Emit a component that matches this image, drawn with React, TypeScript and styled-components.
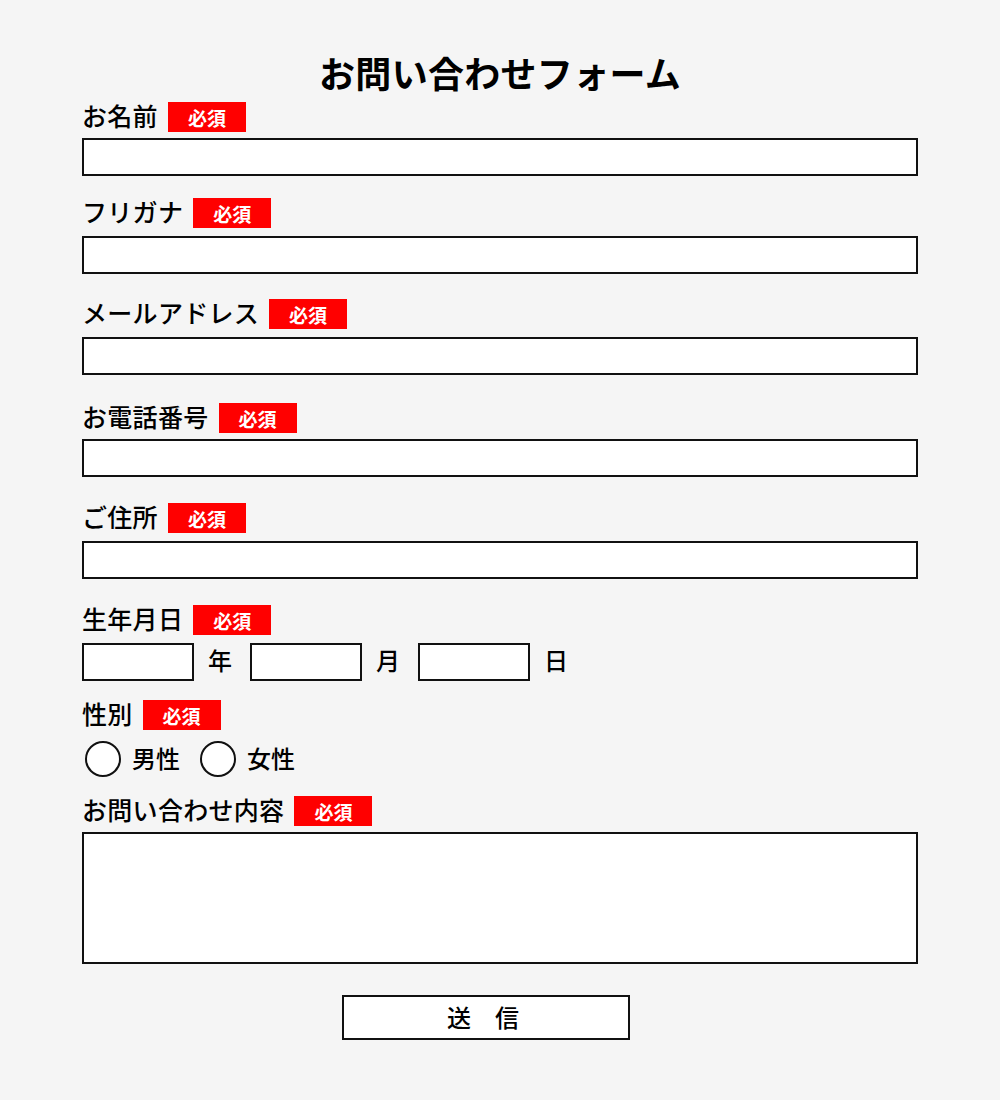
import React from "react";
import styled, { createGlobalStyle } from "styled-components";

const Global = createGlobalStyle`
  html, body {
    margin: 0;
    padding: 0;
    background: #f5f5f5;
  }
  body {
    font-family: "Noto Sans CJK JP", "Noto Sans", sans-serif;
    color: #000;
  }
  * { box-sizing: border-box; }
`;

const Page = styled.div`
  width: 1000px;
  min-height: 1100px;
  background: #f5f5f5;
  padding-top: 50px;
`;

const Form = styled.form`
  width: 836px;
  margin: 0 auto;
  display: flex;
  flex-direction: column;
`;

const Title = styled.h1`
  margin: 0;
  font-size: 36px;
  line-height: 44px;
  font-weight: 700;
  text-align: center;
  letter-spacing: 0.3px;
`;

const Field = styled.div<{ $top: number }>`
  margin-top: ${(p) => p.$top}px;
  display: flex;
  flex-direction: column;
`;

const LabelRow = styled.div<{ $gap: number }>`
  display: flex;
  align-items: flex-start;
  gap: 10px;
  height: 30px;
  margin-bottom: ${(p) => p.$gap}px;
`;

const Label = styled.label`
  font-size: 25px;
  line-height: 26px;
  font-weight: 500;
  letter-spacing: 0.3px;
`;

const Badge = styled.span`
  display: inline-flex;
  align-items: center;
  justify-content: center;
  width: 78px;
  height: 30px;
  background: #ff0000;
  color: #fff;
  font-size: 19px;
  font-weight: 700;
`;

const TextInput = styled.input`
  display: block;
  width: 100%;
  height: 38px;
  border: 2px solid #111;
  background: #fff;
  margin: 0;
  padding: 0 8px;
  font: inherit;
  outline: none;
`;

const TextArea = styled.textarea`
  display: block;
  width: 100%;
  height: 132px;
  border: 2px solid #111;
  background: #fff;
  margin: 0;
  padding: 8px;
  font: inherit;
  resize: none;
  outline: none;
`;

const DateRow = styled.div`
  display: flex;
  align-items: center;
`;

const DateInput = styled.input`
  width: 112px;
  height: 38px;
  border: 2px solid #111;
  background: #fff;
  margin: 0;
  padding: 0 6px;
  font: inherit;
  outline: none;
`;

const Unit = styled.span`
  font-size: 24px;
  line-height: 26px;
  font-weight: 500;
  margin: 0 18px 4px 14px;
`;

const RadioRow = styled.div`
  display: flex;
  align-items: center;
  padding-left: 3px;
  height: 36px;
`;

const RadioLabel = styled.label`
  display: flex;
  align-items: center;
  gap: 11px;
  margin-right: 20px;
  font-size: 24px;
  line-height: 36px;
  font-weight: 500;
`;

const RadioText = styled.span`
  line-height: 26px;
  margin-bottom: 3px;
`;

const Radio = styled.input`
  appearance: none;
  -webkit-appearance: none;
  width: 36px;
  height: 36px;
  margin: 0;
  border: 2px solid #111;
  border-radius: 50%;
  background: #fff;
`;

const SubmitWrap = styled.div`
  margin-top: 31px;
  display: flex;
  padding-left: 260px;
`;

const Submit = styled.button`
  width: 288px;
  height: 45px;
  border: 2px solid #111;
  background: #fff;
  font-family: inherit;
  font-size: 24px;
  font-weight: 500;
  color: #000;
  padding: 0 6px 3px 0;
  cursor: pointer;
`;

const fields = [
  { label: "お名前", top: 8, gap: 6 },
  { label: "フリガナ", top: 22, gap: 8 },
  { label: "メールアドレス", top: 25, gap: 8 },
  { label: "お電話番号", top: 28, gap: 6 },
  { label: "ご住所", top: 26, gap: 8 },
];

export default function App() {
  return (
    <Page>
      <Global />
      <Form onSubmit={(e) => e.preventDefault()}>
        <Title>お問い合わせフォーム</Title>
        {fields.map((f) => (
          <Field key={f.label} $top={f.top}>
            <LabelRow $gap={f.gap}>
              <Label>{f.label}</Label>
              <Badge>必須</Badge>
            </LabelRow>
            <TextInput type="text" />
          </Field>
        ))}
        <Field $top={26}>
          <LabelRow $gap={8}>
            <Label>生年月日</Label>
            <Badge>必須</Badge>
          </LabelRow>
          <DateRow>
            <DateInput type="text" />
            <Unit>年</Unit>
            <DateInput type="text" />
            <Unit>月</Unit>
            <DateInput type="text" />
            <Unit>日</Unit>
          </DateRow>
        </Field>
        <Field $top={19}>
          <LabelRow $gap={11}>
            <Label>性別</Label>
            <Badge>必須</Badge>
          </LabelRow>
          <RadioRow>
            <RadioLabel>
              <Radio type="radio" name="gender" />
              <RadioText>男性</RadioText>
            </RadioLabel>
            <RadioLabel>
              <Radio type="radio" name="gender" />
              <RadioText>女性</RadioText>
            </RadioLabel>
          </RadioRow>
        </Field>
        <Field $top={19}>
          <LabelRow $gap={6}>
            <Label>お問い合わせ内容</Label>
            <Badge>必須</Badge>
          </LabelRow>
          <TextArea />
        </Field>
        <SubmitWrap>
          <Submit type="submit">送　信</Submit>
        </SubmitWrap>
      </Form>
    </Page>
  );
}
